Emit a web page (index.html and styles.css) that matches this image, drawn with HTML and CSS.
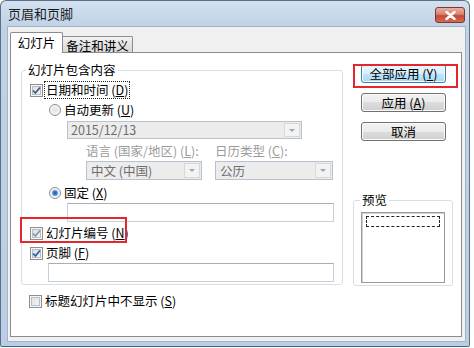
FILE: index.html
```html
<!DOCTYPE html>
<html lang="zh-CN">
<head>
    <meta charset="UTF-8">
    <title>页眉和页脚</title>
    <link rel="stylesheet" href="styles.css">
</head>
<body>
    <div class="window">
        <div class="titlebar">
            <span class="title">页眉和页脚</span>
            <span class="close-btn">
                <svg width="13" height="9" viewBox="0 0 13 9"><path d="M2.5 1 L10.5 8 M10.5 1 L2.5 8" stroke="#fff" stroke-width="2.4" stroke-linecap="round"/></svg>
            </span>
        </div>

        <div class="frame">
            <div class="client">
                <div class="tabs">
                    <div class="tab active">幻灯片</div>
                    <div class="tab">备注和讲义</div>
                </div>

                <div class="panel">
                    <div class="main-col">
                        <fieldset class="group">
                            <legend>幻灯片包含内容</legend>

                            <div class="row first">
                                <span class="checkbox"><svg width="9" height="9" viewBox="0 0 9 9"><path d="M1 4.5 L3.4 7 L8 1.5" fill="none" stroke="#44598f" stroke-width="1.8"/></svg></span>
                                <span class="label focus">日期和时间 (<u>D</u>)</span>
                            </div>

                            <div class="row indent">
                                <span class="radio"></span>
                                <span class="label">自动更新 (<u>U</u>)</span>
                            </div>

                            <div class="combo date-combo">
                                <span class="combo-text">2015/12/13</span>
                                <span class="drop"></span>
                            </div>

                            <div class="lang-grid">
                                <span class="muted">语言 (国家/地区) (<u>L</u>):</span>
                                <span class="muted">日历类型 (<u>C</u>):</span>
                                <div class="combo">
                                    <span class="combo-text">中文 (中国)</span>
                                    <span class="drop"></span>
                                </div>
                                <div class="combo">
                                    <span class="combo-text">公历</span>
                                    <span class="drop"></span>
                                </div>
                            </div>

                            <div class="row indent fixed-row">
                                <span class="radio on"></span>
                                <span class="label">固定 (<u>X</u>)</span>
                            </div>

                            <div class="field fixed-field"></div>

                            <div class="row slide-row highlight">
                                <span class="checkbox"><svg width="9" height="9" viewBox="0 0 9 9"><path d="M1 4.5 L3.4 7 L8 1.5" fill="none" stroke="#8795b2" stroke-width="1.8"/></svg></span>
                                <span class="label">幻灯片编号 (<u>N</u>)</span>
                            </div>

                            <div class="row footer-row">
                                <span class="checkbox"><svg width="9" height="9" viewBox="0 0 9 9"><path d="M1 4.5 L3.4 7 L8 1.5" fill="none" stroke="#2f5cb0" stroke-width="1.8"/></svg></span>
                                <span class="label">页脚 (<u>F</u>)</span>
                            </div>

                            <div class="field footer-field"></div>
                        </fieldset>

                        <div class="row title-row">
                            <span class="checkbox"></span>
                            <span class="label">标题幻灯片中不显示 (<u>S</u>)</span>
                        </div>
                    </div>

                    <div class="side-col">
                        <div class="btn default highlight">全部应用 (<u>Y</u>)</div>
                        <div class="btn">应用 (<u>A</u>)</div>
                        <div class="btn">取消</div>

                        <fieldset class="group preview">
                            <legend>预览</legend>
                            <div class="slide">
                                <div class="slide-header"></div>
                            </div>
                        </fieldset>
                    </div>
                </div>
            </div>
        </div>
    </div>
</body>
</html>
```

FILE: styles.css
```css
body {
    margin: 0;
    background: #fff;
    font-family: "Noto Sans CJK SC", "Noto Sans", sans-serif;
    font-size: 12.5px;
    color: #000;
}

u {
    text-decoration: underline;
    text-underline-offset: 1px;
}

/* window frame (win7 basic) */
.window {
    box-sizing: border-box;
    width: 470px;
    height: 347px;
    border: 1px solid #5d6f84;
    border-bottom-color: #3c6a80;
    border-radius: 6px 6px 2px 2px;
    background: linear-gradient(#d3e1f0, #bfd2e7 26px, #b9cee4);
    display: flex;
    flex-direction: column;
}

.titlebar {
    height: 25px;
    display: flex;
    align-items: center;
    justify-content: space-between;
}

.title {
    padding-left: 7px;
    font-size: 13px;
    color: #1b1b1b;
}

.close-btn {
    align-self: flex-start;
    margin-top: 6px;
    margin-right: 4px;
    width: 30px;
    height: 16px;
    box-sizing: border-box;
    border: 1px solid #7a3a31;
    border-radius: 3px;
    background: linear-gradient(#eab0a4, #d8826f 45%, #c44a35 55%, #d56a52);
    display: flex;
    align-items: center;
    justify-content: center;
}

.frame {
    flex: 1;
    padding: 0 3px 4px 6px;
    display: flex;
}

.client {
    flex: 1;
    border: 1px solid #a3b4c6;
    background: #f0f0f0;
    padding: 5px 3px 4px 2px;
}

/* tabs */
.tabs {
    display: flex;
    align-items: flex-end;
    height: 20px;
}

.tab {
    box-sizing: border-box;
    height: 16px;
    width: 70px;
    border: 1px solid #898c95;
    border-left: none;
    border-bottom: none;
    border-radius: 0 2px 0 0;
    background: linear-gradient(#f3f3f3, #e3e3e3 50%, #d8d8d8);
    text-align: center;
    line-height: 16px;
    padding-top: 1px;
}

.tab.active {
    position: relative;
    z-index: 1;
    height: 21px;
    width: 53px;
    margin-bottom: -1px;
    border-left: 1px solid #898c95;
    border-radius: 2px 2px 0 0;
    background: #fff;
    line-height: 20px;
    padding-top: 0;
}

.panel {
    box-sizing: border-box;
    height: 285px;
    border: 1px solid #898c95;
    background: #fff;
    padding-left: 10px;
    display: flex;
    align-items: flex-start;
}

/* group boxes */
.group {
    margin: 0;
    padding: 0 0 2px 0;
    min-width: 0;
    border: 1px solid #d5dfe5;
    border-radius: 3px;
}

.group legend {
    margin-left: 4px;
    padding: 0 2px;
    line-height: 14px;
}

.main-col {
    width: 322px;
    margin-top: 10px;
}

.main-col .group {
    box-sizing: border-box;
    width: 322px;
}

.row {
    display: flex;
    align-items: center;
    height: 16px;
    margin-top: 4px;
    padding-left: 8px;
    line-height: 16px;
    white-space: nowrap;
}

.row.first { margin-top: 5px; }
.row.indent { padding-left: 27px; }
.fixed-row { margin-top: 5px; }
.slide-row { margin-top: 3px; }

.title-row {
    margin-top: 8px;
}

.label {
    margin-left: 3px;
}

.label.focus {
    outline: 1px dotted #222;
    outline-offset: 0;
    padding: 0 1px;
    margin-left: 2px;
}

.checkbox {
    box-sizing: border-box;
    width: 13px;
    height: 13px;
    flex: none;
    border: 1px solid #8e8f8f;
    background: linear-gradient(135deg, #d8dadc, #f9f9f9);
    box-shadow: inset 0 0 0 1px #f6f6f6, inset 0 0 0 2px #b9bec4;
    display: flex;
    align-items: center;
    justify-content: center;
}

.radio {
    box-sizing: border-box;
    width: 12px;
    height: 12px;
    flex: none;
    border: 1px solid #8e8f8f;
    border-radius: 50%;
    background: radial-gradient(circle, #e0e0e0 0, #f6f6f6 5px);
}

.radio.on {
    background: radial-gradient(circle, #1d5aa6 0, #3f83cf 2px, #8fbbe8 3px, #eef1f4 3.5px, #f6f6f6 5px);
}

/* disabled combos */
.combo {
    box-sizing: border-box;
    height: 19px;
    border: 1px solid #b6c2cf;
    background: #ececec;
    display: flex;
    color: #6e6e6e;
}

.combo-text {
    flex: 1;
    padding-left: 4px;
    line-height: 17px;
    white-space: nowrap;
}

.drop {
    box-sizing: border-box;
    width: 16px;
    margin: 1px;
    border: 1px solid #d8d8d8;
    background: #f3f3f3;
    display: flex;
    align-items: center;
    justify-content: center;
}

.drop::after {
    content: "";
    border-left: 3px solid transparent;
    border-right: 3px solid transparent;
    border-top: 3px solid #a5a5a5;
}

.date-combo {
    width: 235px;
    height: 18px;
    margin: 3px 0 0 45px;
}

.date-combo .combo-text {
    padding-left: 3px;
    line-height: 16px;
}

.lang-grid {
    display: grid;
    grid-template-columns: 116px 118px;
    grid-template-rows: 16px 19px;
    column-gap: 13px;
    row-gap: 2px;
    margin: 4px 0 0 64px;
    line-height: 16px;
}

.muted {
    color: #9b9b9b;
    white-space: nowrap;
}

/* text boxes */
.field {
    box-sizing: border-box;
    height: 19px;
    margin-top: 2px;
    border: 1px solid #c9cfd6;
    border-top-color: #abadb3;
    background: #fff;
}

.fixed-field {
    width: 267px;
    margin-left: 45px;
}

.footer-field {
    width: 286px;
    margin-left: 26px;
}

/* red highlight frames */
.highlight {
    position: relative;
}

.highlight::after {
    content: "";
    position: absolute;
    border: 2px solid #e4262e;
}

.slide-row.highlight::after {
    left: -2px;
    top: -8px;
    width: 103px;
    height: 22px;
}

.btn.highlight::after {
    left: -9px;
    top: -1px;
    width: 101px;
    height: 20px;
}

/* buttons */
.side-col {
    width: 100px;
    margin-left: 10px;
    margin-top: 11px;
}

.btn {
    box-sizing: border-box;
    width: 85px;
    height: 19px;
    margin-left: 8px;
    margin-bottom: 10px;
    border: 1px solid #707070;
    border-radius: 3px;
    background: linear-gradient(#f2f2f2, #ebebeb 50%, #dddddd 50%, #cfcfcf);
    box-shadow: inset 0 0 0 1px #fbfbfb;
    text-align: center;
    line-height: 17px;
}

.btn.default {
    border-color: #3c7fb1;
    background: linear-gradient(#eaf6fd, #d9f0fc 50%, #bee6fd 50%, #a7d9f5);
}

.preview {
    box-sizing: border-box;
    width: 100px;
    margin-top: 52px;
    padding-bottom: 2px;
}

.preview legend {
    margin-left: 6px;
}

.slide {
    box-sizing: border-box;
    width: 84px;
    height: 71px;
    margin: 5px 0 0 7px;
    border: 1px solid #9b9b9b;
    box-shadow: inset 1px 1px 0 #cfcfcf;
    background: #fff;
    padding: 3px 0 0 4px;
}

.slide-header {
    box-sizing: border-box;
    width: 74px;
    height: 11px;
    border: 1px dashed #222;
}
```
